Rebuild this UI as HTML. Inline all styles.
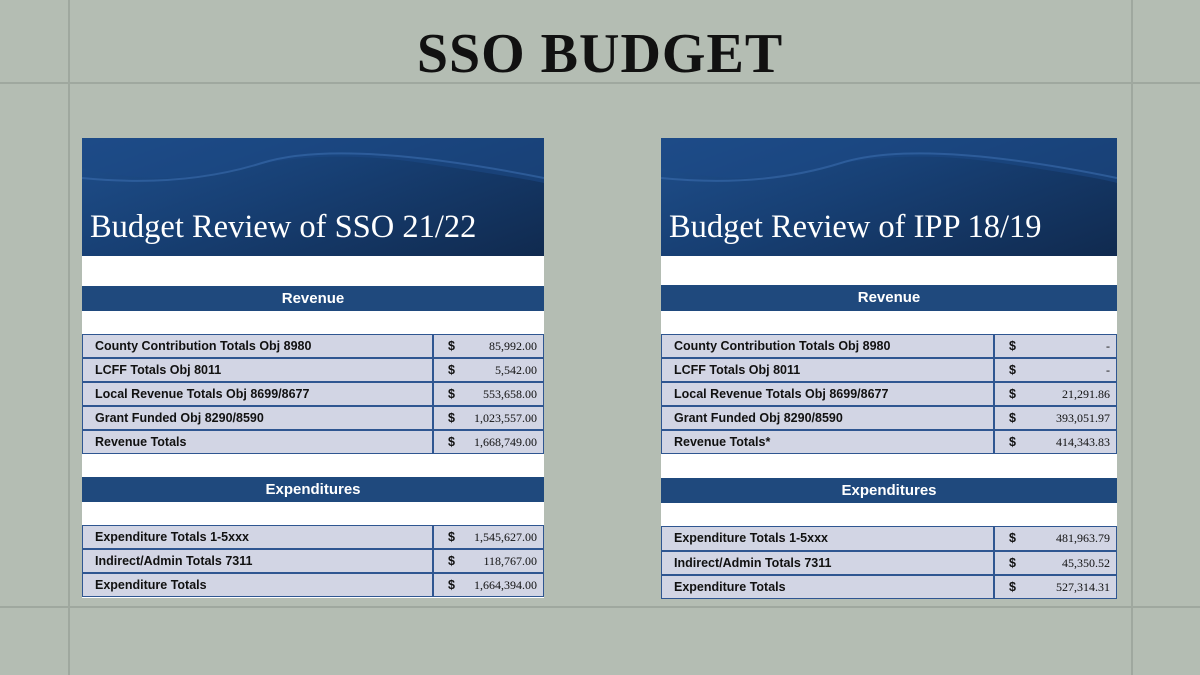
<!DOCTYPE html>
<html><head><style>
body{margin:0;width:1200px;height:675px;background:#b4bdb3;position:relative;overflow:hidden;font-family:"Liberation Sans",sans-serif}
.l{position:absolute;background:#9fa89f}
h1{position:absolute;left:0;width:1200px;top:22px;margin:0;text-align:center;font-family:"Liberation Serif",serif;font-weight:bold;font-size:56px;letter-spacing:1px;color:#111}
.p{position:absolute;background:#fff;top:138px}
.ban{position:absolute;left:0;top:0;right:0;height:118px;background:linear-gradient(160deg,#1f4f8c 0%,#173f73 45%,#102a4f 100%);overflow:hidden}
.ban .t{position:absolute;left:8px;bottom:10px;color:#fff;font-family:"Liberation Serif",serif;font-size:32.5px}
.bar{position:absolute;left:0;right:0;background:#1f497d;color:#fff;font-weight:bold;font-size:15px;text-align:center;line-height:26px;height:25px}
.r{position:absolute;left:0;right:0;height:22px;background:#d2d5e4;border:1px solid #2f5691;font-weight:bold;font-size:12.5px;color:#111;line-height:22px}
.r span{position:absolute}
.r .a{left:12px}.r .d{border-left:2px solid #2f5691;top:0;bottom:0;padding-left:14px}
.r .v{right:6px;font-family:"Liberation Serif",serif;font-size:12px;font-weight:normal}
</style></head><body>
<div class="l" style="left:68px;top:0;width:2px;height:675px"></div>
<div class="l" style="left:1131px;top:0;width:2px;height:675px"></div>
<div class="l" style="left:0;top:82px;width:1200px;height:2px"></div>
<div class="l" style="left:0;top:606px;width:1200px;height:2px"></div>
<h1>SSO BUDGET</h1>

<div class="p" style="left:82px;width:462px;height:460px">
<div class="ban"><svg width="462" height="118" style="position:absolute;left:0;top:0"><path d="M0 30 Q80 50 160 30 T340 25 T462 45 L462 0 L0 0Z" fill="#1d4a86" opacity=".6"/><path d="M0 40 Q100 50 180 25 T462 40" stroke="#3a6cae" stroke-width="2" fill="none" opacity=".6"/></svg><div class="t">Budget Review of SSO 21/22</div></div>
<div class="bar" style="top:148px">Revenue</div>
<div class="r" style="top:196px"><span class="a">County Contribution Totals Obj 8980</span><span class="d" style="left:349px">$</span><span class="v">85,992.00</span></div>
<div class="r" style="top:220px"><span class="a">LCFF Totals Obj 8011</span><span class="d" style="left:349px">$</span><span class="v">5,542.00</span></div>
<div class="r" style="top:244px"><span class="a">Local Revenue Totals Obj 8699/8677</span><span class="d" style="left:349px">$</span><span class="v">553,658.00</span></div>
<div class="r" style="top:268px"><span class="a">Grant Funded Obj 8290/8590</span><span class="d" style="left:349px">$</span><span class="v">1,023,557.00</span></div>
<div class="r" style="top:292px"><span class="a">Revenue Totals</span><span class="d" style="left:349px">$</span><span class="v">1,668,749.00</span></div>
<div class="bar" style="top:339px">Expenditures</div>
<div class="r" style="top:387px"><span class="a">Expenditure Totals 1-5xxx</span><span class="d" style="left:349px">$</span><span class="v">1,545,627.00</span></div>
<div class="r" style="top:411px"><span class="a">Indirect/Admin Totals 7311</span><span class="d" style="left:349px">$</span><span class="v">118,767.00</span></div>
<div class="r" style="top:435px"><span class="a">Expenditure Totals</span><span class="d" style="left:349px">$</span><span class="v">1,664,394.00</span></div>
</div>

<div class="p" style="left:661px;width:456px;height:461px">
<div class="ban"><svg width="456" height="118" style="position:absolute;left:0;top:0"><path d="M0 30 Q80 50 160 30 T340 25 T456 45 L456 0 L0 0Z" fill="#1d4a86" opacity=".6"/><path d="M0 40 Q100 50 180 25 T456 40" stroke="#3a6cae" stroke-width="2" fill="none" opacity=".6"/></svg><div class="t">Budget Review of IPP 18/19</div></div>
<div class="bar" style="top:147px;height:26px">Revenue</div>
<div class="r" style="top:196px"><span class="a">County Contribution Totals Obj 8980</span><span class="d" style="left:331px">$</span><span class="v">-</span></div>
<div class="r" style="top:220px"><span class="a">LCFF Totals Obj 8011</span><span class="d" style="left:331px">$</span><span class="v">-</span></div>
<div class="r" style="top:244px"><span class="a">Local Revenue Totals Obj 8699/8677</span><span class="d" style="left:331px">$</span><span class="v">21,291.86</span></div>
<div class="r" style="top:268px"><span class="a">Grant Funded Obj 8290/8590</span><span class="d" style="left:331px">$</span><span class="v">393,051.97</span></div>
<div class="r" style="top:292px"><span class="a">Revenue Totals*</span><span class="d" style="left:331px">$</span><span class="v">414,343.83</span></div>
<div class="bar" style="top:340px">Expenditures</div>
<div class="r" style="top:388px;height:23px"><span class="a">Expenditure Totals 1-5xxx</span><span class="d" style="left:331px">$</span><span class="v">481,963.79</span></div>
<div class="r" style="top:413px"><span class="a">Indirect/Admin Totals 7311</span><span class="d" style="left:331px">$</span><span class="v">45,350.52</span></div>
<div class="r" style="top:437px"><span class="a">Expenditure Totals</span><span class="d" style="left:331px">$</span><span class="v">527,314.31</span></div>
</div>
</body></html>
